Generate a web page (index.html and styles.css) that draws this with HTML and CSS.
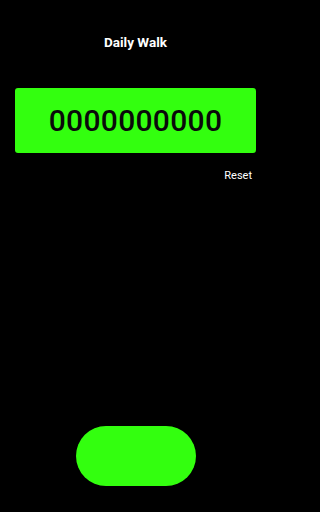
FILE: index.html
```html
<!DOCTYPE html>
<html>
<head>
<meta charset="utf-8">
<link rel="stylesheet" href="styles.css">
</head>
<body>
<div class="app">
  <header class="title">Daily Walk</header>
  <div class="counter">0000000000</div>
  <div class="reset-row"><span class="reset">Reset</span></div>
  <div class="spacer"></div>
  <div class="btn-row"><button class="step-btn" aria-label="Step"></button></div>
</div>
</body>
</html>
```
FILE: styles.css
```css
html, body {
  margin: 0;
  padding: 0;
  background: #000;
  height: 100%;
}
.app {
  display: flex;
  flex-direction: column;
  width: 271px;
  height: 512px;
  font-family: Roboto, "Noto Sans", sans-serif;
  color: #fff;
  box-sizing: border-box;
  padding: 0 15px;
}
.title {
  margin-top: 34px;
  height: 16px;
  line-height: 16px;
  text-align: center;
  font-size: 13.5px;
  font-weight: 700;
}
.counter {
  margin-top: 38px;
  height: 65px;
  background: #33ff0f;
  border-radius: 3px;
  display: flex;
  align-items: center;
  justify-content: center;
  font-size: 30px;
  font-weight: 500;
  color: #0a0a0a;
  letter-spacing: 0.3px;
}
.reset-row {
  display: flex;
  justify-content: flex-end;
  margin-top: 16px;
  padding-right: 4px;
}
.reset {
  font-size: 11px;
  line-height: 13px;
}
.spacer {
  flex: 1;
}
.btn-row {
  display: flex;
  justify-content: center;
  margin-bottom: 26px;
}
.step-btn {
  width: 120px;
  height: 60px;
  border: none;
  border-radius: 30px;
  background: #33ff0f;
  padding: 0;
  margin-left: 1px;
}
```
